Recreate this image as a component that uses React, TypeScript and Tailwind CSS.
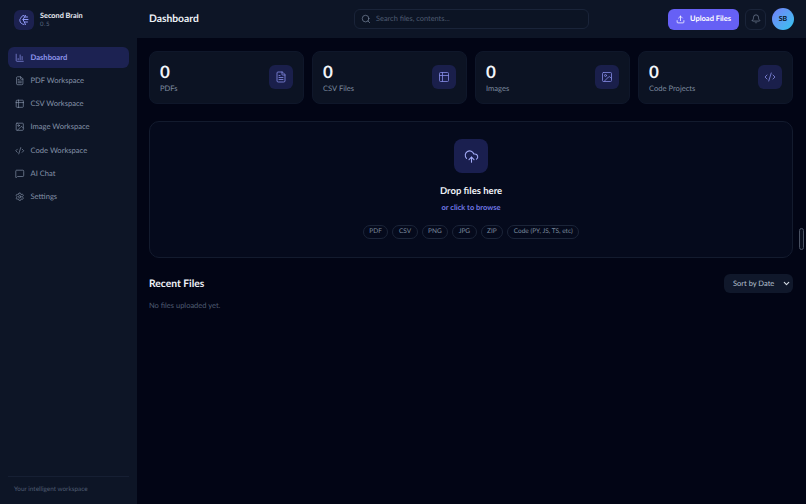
import { BarChart3, Bell, ChevronDown, Code2, CloudUpload, FileText, Image, MessageSquare, Search, Settings, Table2, Upload } from "lucide-react"

const NAV = [
  { label: "Dashboard", icon: BarChart3, active: true },
  { label: "PDF Workspace", icon: FileText },
  { label: "CSV Workspace", icon: Table2 },
  { label: "Image Workspace", icon: Image },
  { label: "Code Workspace", icon: Code2 },
  { label: "AI Chat", icon: MessageSquare },
  { label: "Settings", icon: Settings },
]

const STATS = [
  { label: "PDFs", icon: FileText },
  { label: "CSV Files", icon: Table2 },
  { label: "Images", icon: Image },
  { label: "Code Projects", icon: Code2 },
]

const TYPES = ["PDF", "CSV", "PNG", "JPG", "ZIP", "Code (PY, JS, TS, etc)"]

function BrainLogo() {
  return (
    <svg viewBox="0 0 24 24" className="w-[12px] h-[12px] text-[#8f98f5]" fill="none" stroke="currentColor" strokeWidth="2" strokeLinecap="round" strokeLinejoin="round">
      <path d="M12 3C8 3 6 6 6 8c-2 1-3 4-2 6 0 3 3 6 8 7" />
      <path d="M15 3l-5 8 5 10" />
      <path d="M10 11h10" />
      <path d="M13 6h6" />
      <path d="M13 16h6" />
    </svg>
  )
}

export default function App() {
  return (
    <div className="flex h-[504px] w-[806px] overflow-hidden bg-[#020515] font-['Lato','Noto_Sans',sans-serif] [text-rendering:geometricPrecision] relative">
      {/* sidebar */}
      <aside className="w-[137px] shrink-0 flex flex-col bg-[#0d1526]">
        <div className="flex items-center gap-[6px] pl-[14px] h-[40px] mb-[7px]">
          <div className="w-5 h-5 rounded-md bg-[#1c2150] flex items-center justify-center">
            <BrainLogo />
          </div>
          <div>
            <div className="text-[7.3px] leading-[10px] font-bold text-[#e8ecf4]">Second Brain</div>
            <div className="text-[6px] leading-[8px] text-[#5c6b82] tracking-[0.5px]">0.5</div>
          </div>
        </div>
        <nav className="flex flex-col gap-[2px] px-2">
          {NAV.map((n) => (
            <div
              key={n.label}
              className={`flex items-center gap-[6px] h-[21.2px] pl-[7px] rounded-md text-[7.6px] ${
                n.active ? "bg-[#1c2252] text-[#8f97ee] font-bold" : "text-[#8492a8]"
              }`}
            >
              <n.icon className="w-[9.5px] h-[9.5px]" strokeWidth={1.7} />
              {n.label}
            </div>
          ))}
        </nav>
        <div className="mt-auto mx-2 border-t border-[#161f33] pt-[8px] pb-[10px] pl-[6px] text-[6.4px] leading-[9px] text-[#4f5c72]">
          Your intelligent workspace
        </div>
      </aside>

      <div className="flex-1 flex flex-col min-w-0">
        {/* header */}
        <header className="h-[38px] shrink-0 flex items-center bg-[#0d1526] pl-3 pr-[12px]">
          <h1 className="pt-[2px] text-[10.3px] font-bold text-[#eef1f7] w-[205px]">Dashboard</h1>
          <div className="w-[235px] h-[20px] rounded-md border border-[#1a2439] bg-[#0c1424] flex items-center pl-[6px] gap-[5px] text-[7.4px] text-[#4f5c72]">
            <Search className="w-[10px] h-[10px] text-[#76849a]" strokeWidth={1.7} />
            Search files, contents...
          </div>
          <div className="ml-auto flex items-center gap-[6px]">
            <div className="flex items-center justify-center gap-[5px] w-[71px] h-[21px] rounded-md bg-[#6660f5] text-white text-[7.5px] font-bold">
              <Upload className="w-[9px] h-[9px]" strokeWidth={2} />
              Upload Files
            </div>
            <div className="w-[21px] h-[21px] rounded-md border border-[#1a2439] flex items-center justify-center text-[#76849a]">
              <Bell className="w-[10px] h-[10px]" strokeWidth={1.7} />
            </div>
            <div className="w-[22px] h-[22px] rounded-full bg-gradient-to-br from-[#6f7cf8] to-[#22c6ee] flex items-center justify-center text-[7px] font-bold text-[#0a1222]">
              SB
            </div>
          </div>
        </header>

        <main className="flex-1 pl-3 pr-[13px] pt-[13px]">
          {/* stats */}
          <div className="grid grid-cols-4 gap-2">
            {STATS.map((s) => (
              <div key={s.label} className="h-[53px] rounded-lg bg-[#0c1323] border border-[#0f172a] flex items-center justify-between pl-[10px] pr-[10px]">
                <div>
                  <div className="text-[17px] leading-[20px] font-bold text-[#f1f4f9]">0</div>
                  <div className="text-[7.6px] leading-[12px] text-[#7c8a9f]">{s.label}</div>
                </div>
                <div className="w-[24px] h-[24px] rounded-md bg-[#1a1f4b] flex items-center justify-center text-[#7f87de] -mt-[2px]">
                  <s.icon className="w-[12px] h-[12px]" strokeWidth={1.7} />
                </div>
              </div>
            ))}
          </div>

          {/* dropzone */}
          <div className="mt-[17px] h-[137px] rounded-[10px] border border-[#131b2e] bg-[#050a1c] flex flex-col items-center pt-[17px]">
            <div className="w-[34px] h-[34px] rounded-lg bg-[#1a1f4f] flex items-center justify-center text-[#a3abf6]">
              <CloudUpload className="w-[15px] h-[15px]" strokeWidth={1.7} />
            </div>
            <div className="mt-[12px] text-[9.5px] leading-[14px] font-bold text-[#eef1f7]">Drop files here</div>
            <div className="mt-[3px] text-[7.5px] leading-[11px] font-bold text-[#7078e6]">or click to browse</div>
            <div className="mt-[12px] flex gap-[4px]">
              {TYPES.map((t) => (
                <span key={t} className="h-[14px] px-[5.5px] rounded-full border border-[#1b2438] flex items-center text-[6.5px] text-[#7c8a9f]">
                  {t}
                </span>
              ))}
            </div>
          </div>

          {/* recent files */}
          <div className="mt-[16px] flex items-center justify-between">
            <h2 className="pt-[2px] text-[10.3px] font-bold text-[#eef1f7]">Recent Files</h2>
            <div className="w-[69px] h-[19px] rounded-md bg-[#10182b] flex items-center pl-[9px] pr-[2px] justify-between text-[7.5px] text-[#b6c0cf]">
              Sort by Date
              <ChevronDown className="w-[9px] h-[9px] text-[#d5dbe5]" strokeWidth={3} />
            </div>
          </div>
          <p className="mt-[7px] text-[7.5px] leading-[11px] text-[#4f5c72]">No files uploaded yet.</p>
        </main>
      </div>

      {/* scrollbar thumb */}
      <div className="absolute left-[799px] top-[228px] w-[5px] h-[22px] rounded-full border border-[#4a5263] bg-[#0b1020]" />
    </div>
  )
}
